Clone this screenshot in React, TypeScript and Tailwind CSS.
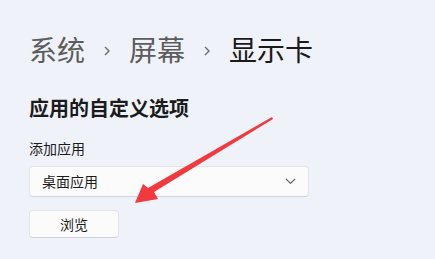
const font = { fontFamily: '"Noto Sans CJK SC", "Noto Sans", sans-serif' };

function Sep() {
  return (
    <svg width="6" height="10" viewBox="0 0 6 10" className="mx-[19px] mt-[4px] text-[#6b6b6b]" aria-hidden="true">
      <path d="M1 1l4 4-4 4" fill="none" stroke="currentColor" strokeWidth="1.4" />
    </svg>
  );
}

export default function App() {
  return (
    <main
      className="relative h-[259px] w-[435px] overflow-hidden bg-[#eff2f9] pl-[29px] text-[#1b1b1b]"
      style={font}
    >
      <nav className="flex items-center pt-[29px] text-[28px] leading-[40px]">
        <span className="text-[#5c5c5c]">系统</span>
        <Sep />
        <span className="text-[#5c5c5c]">屏幕</span>
        <Sep />
        <span className="text-[#1a1a1a]">显示卡</span>
      </nav>

      <h2 className="mt-[25px] text-[20px] font-semibold leading-[28px]">应用的自定义选项</h2>

      <p className="mt-[16px] text-[14px] leading-[20px]">添加应用</p>

      <button className="mt-[8px] flex h-[31px] w-[280px] items-center justify-between rounded-[4px] border border-[#e3e5ea] border-b-[#cfd2d8] bg-[#fbfbfc] pl-[12px] pr-[12px] text-[14px]">
        <span>桌面应用</span>
        <svg width="11" height="7" viewBox="0 0 11 7" className="text-[#6a6a6a]" aria-hidden="true">
          <path d="M1 1l4.5 4.5L10 1" fill="none" stroke="currentColor" strokeWidth="1.2" />
        </svg>
      </button>

      <button className="mt-[13px] flex h-[28px] w-[90px] items-center justify-center rounded-[4px] border border-[#e3e5ea] border-b-[#cfd2d8] bg-[#fbfbfc] text-[14px]">
        浏览
      </button>

      <svg className="pointer-events-none absolute left-0 top-0" width="435" height="259" aria-hidden="true">
        <polygon
          points="272,117 273,119 154,192 158,199 135,203 143,184 148,188"
          fill="#f03a3e"
        />
      </svg>
    </main>
  );
}
